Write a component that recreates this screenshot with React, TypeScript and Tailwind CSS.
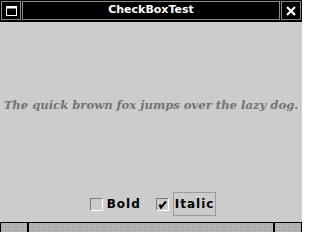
import { useState } from "react";

function Box({ checked }: { checked: boolean }) {
  return (
    <span className="flex h-[13px] w-[13px] items-center justify-center border-t border-l border-[#7a7a7a] border-r border-b border-r-white border-b-white bg-[#cccccc]">
      {checked && (
        <svg width="11" height="11" viewBox="0 0 11 11">
          <path d="M2.5 5.5 L4 8.5 L9 2.5" stroke="#000" strokeWidth="2.2" fill="none" />
        </svg>
      )}
    </span>
  );
}

export default function App() {
  const [bold, setBold] = useState(false);
  const [italic, setItalic] = useState(true);

  return (
    <div className="flex h-[232px] w-[302px] flex-col bg-black font-['DejaVu_Sans',sans-serif]">
      {/* Title bar */}
      <div className="flex h-[22px] gap-px p-px pb-[2px]">
        <div className="flex w-[20px] items-center justify-center border border-[#8a8a8a]">
          <svg width="11" height="10" viewBox="0 0 11 10">
            <rect x="0.5" y="0.5" width="10" height="9" fill="none" stroke="#fff" />
            <rect x="0" y="0" width="11" height="2.5" fill="#fff" />
          </svg>
        </div>
        <div className="flex flex-1 items-center justify-center border border-[#8a8a8a] text-[11px] font-bold text-white">
          CheckBoxTest
        </div>
        <div className="flex w-[20px] items-center justify-center border border-[#8a8a8a]">
          <svg width="10" height="10" viewBox="0 0 10 10">
            <path d="M1 1 L9 9 M9 1 L1 9" stroke="#fff" strokeWidth="2.2" />
          </svg>
        </div>
      </div>

      {/* Content */}
      <div className="flex h-[200px] flex-col bg-[#cccccc]">
        <div className="flex flex-1 items-center justify-center pb-[4px]">
          <p
            className={`whitespace-nowrap font-['DejaVu_Serif',serif] text-[11.6px] font-bold text-[#727272] ${italic ? "italic" : ""} ${bold ? "font-extrabold" : ""}`}
          >
            The quick brown fox jumps over the lazy dog.
          </p>
        </div>
        <div className="flex h-[28px] items-center justify-center gap-[13px] pb-[8px] pl-[2px]">
          <button onClick={() => setBold(!bold)} className="flex items-center gap-[4px] border border-transparent px-px py-[2px]">
            <Box checked={bold} />
            <span className="text-[12px] font-bold tracking-[1px] text-black">Bold</span>
          </button>
          <button onClick={() => setItalic(!italic)} className="flex items-center gap-[4px]">
            <Box checked={italic} />
            <span className="border border-[#9a9a9a] px-px py-[2px] text-[12px] font-bold tracking-[1px] text-black">Italic</span>
          </button>
        </div>
      </div>

      {/* Bottom border */}
      <div className="flex h-[10px] gap-[2px] px-px pt-px">
        <div className="w-[26px] bg-[#b4b4b4] bg-[radial-gradient(circle,#9c9c9c_0.7px,transparent_0.8px)] bg-[length:3px_3px]" />
        <div className="flex-1 bg-[#b4b4b4] bg-[radial-gradient(circle,#9c9c9c_0.7px,transparent_0.8px)] bg-[length:3px_3px]" />
        <div className="w-[26px] bg-[#b4b4b4] bg-[radial-gradient(circle,#9c9c9c_0.7px,transparent_0.8px)] bg-[length:3px_3px]" />
      </div>
    </div>
  );
}
